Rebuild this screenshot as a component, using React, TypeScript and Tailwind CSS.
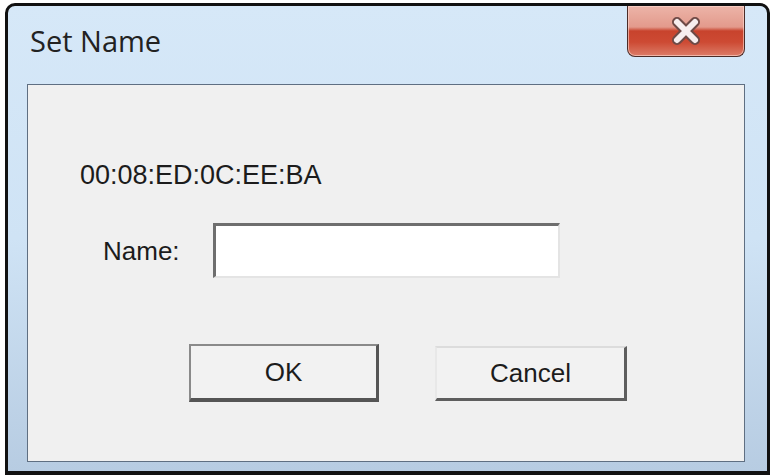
import React from 'react';

const CloseGlyph: React.FC = () => (
  <svg width="32" height="28" viewBox="0 0 32 28">
    <path d="M7 5 L25 23 M25 5 L7 23" stroke="#6e4a46" strokeWidth="10" strokeLinecap="round" />
    <path d="M7 5 L25 23 M25 5 L7 23" stroke="#f7eeee" strokeWidth="6" strokeLinecap="round" />
  </svg>
);

const App: React.FC = () => {
  const textFont = { fontFamily: '"Liberation Sans", Arial, sans-serif' };

  return (
    <div className="w-[773px] h-[475px] bg-white overflow-hidden pt-[3px] pl-[5px]">
      <div className="w-[765px] h-[472px] border-[3px] border-b-[4px] border-[#111] rounded-t-[10px] bg-linear-to-b from-[#d6e8f8] via-[#cfe3f5] to-[#b7cce2] flex flex-col">
        {/* title bar */}
        <div className="h-[78px] flex items-start pl-[22px] pr-[22px]">
          <span
            className="mt-[17px] text-[29px] leading-[36px] text-[#222]"
            style={{ fontFamily: '"Open Sans", "Noto Sans", sans-serif' }}
          >
            Set Name
          </span>
          <button className="ml-auto w-[118px] h-[51px] flex items-center justify-center rounded-b-[8px] border border-t-0 border-[#4b2c28] shadow-[inset_0_0_0_1px_rgba(255,220,210,0.6)] bg-[linear-gradient(to_bottom,#ecb4a8_0%,#e39a8c_42%,#c8432d_50%,#cd4a33_72%,#dc7c68_100%)]">
            <CloseGlyph />
          </button>
        </div>

        {/* client area */}
        <div className="flex-1 ml-[19px] mr-[22px] mb-[9px] border border-[#5f6f82] bg-[#f0f0f0] flex flex-col">
          <div className="pt-[77px] pl-[52px] text-[27px] leading-[26px] text-[#1c1c1c]" style={textFont}>
            00:08:ED:0C:EE:BA
          </div>

          <div className="mt-[35px] pl-[75px] flex items-center gap-[33px]">
            <span className="text-[26px] leading-[26px] text-[#1c1c1c]" style={textFont}>
              Name:
            </span>
            <input
              type="text"
              className="w-[347px] h-[55px] bg-white border-t-[3px] border-l-[3px] border-r-2 border-b-2 border-t-[#6e6e6e] border-l-[#6e6e6e] border-r-[#e4e4e4] border-b-[#e4e4e4] outline-none"
            />
          </div>

          <div className="mt-[66px] pl-[161px] flex items-start gap-[56px]">
            <button
              className="w-[190px] h-[58px] bg-[#f2f2f2] border-t-2 border-l-2 border-r-[3px] border-b-[4px] border-t-[#8a8a8a] border-l-[#8a8a8a] border-r-[#555] border-b-[#555] text-[26px] text-[#1c1c1c]"
              style={textFont}
            >
              OK
            </button>
            <button
              className="mt-[2px] w-[192px] h-[55px] bg-[#f2f2f2] border-t-2 border-l-2 border-r-[3px] border-b-[3px] border-t-[#dcdcdc] border-l-[#e8e8e8] border-r-[#5e5e5e] border-b-[#5e5e5e] text-[26px] text-[#1c1c1c]"
              style={textFont}
            >
              Cancel
            </button>
          </div>
        </div>
      </div>
    </div>
  );
};

export default App;
